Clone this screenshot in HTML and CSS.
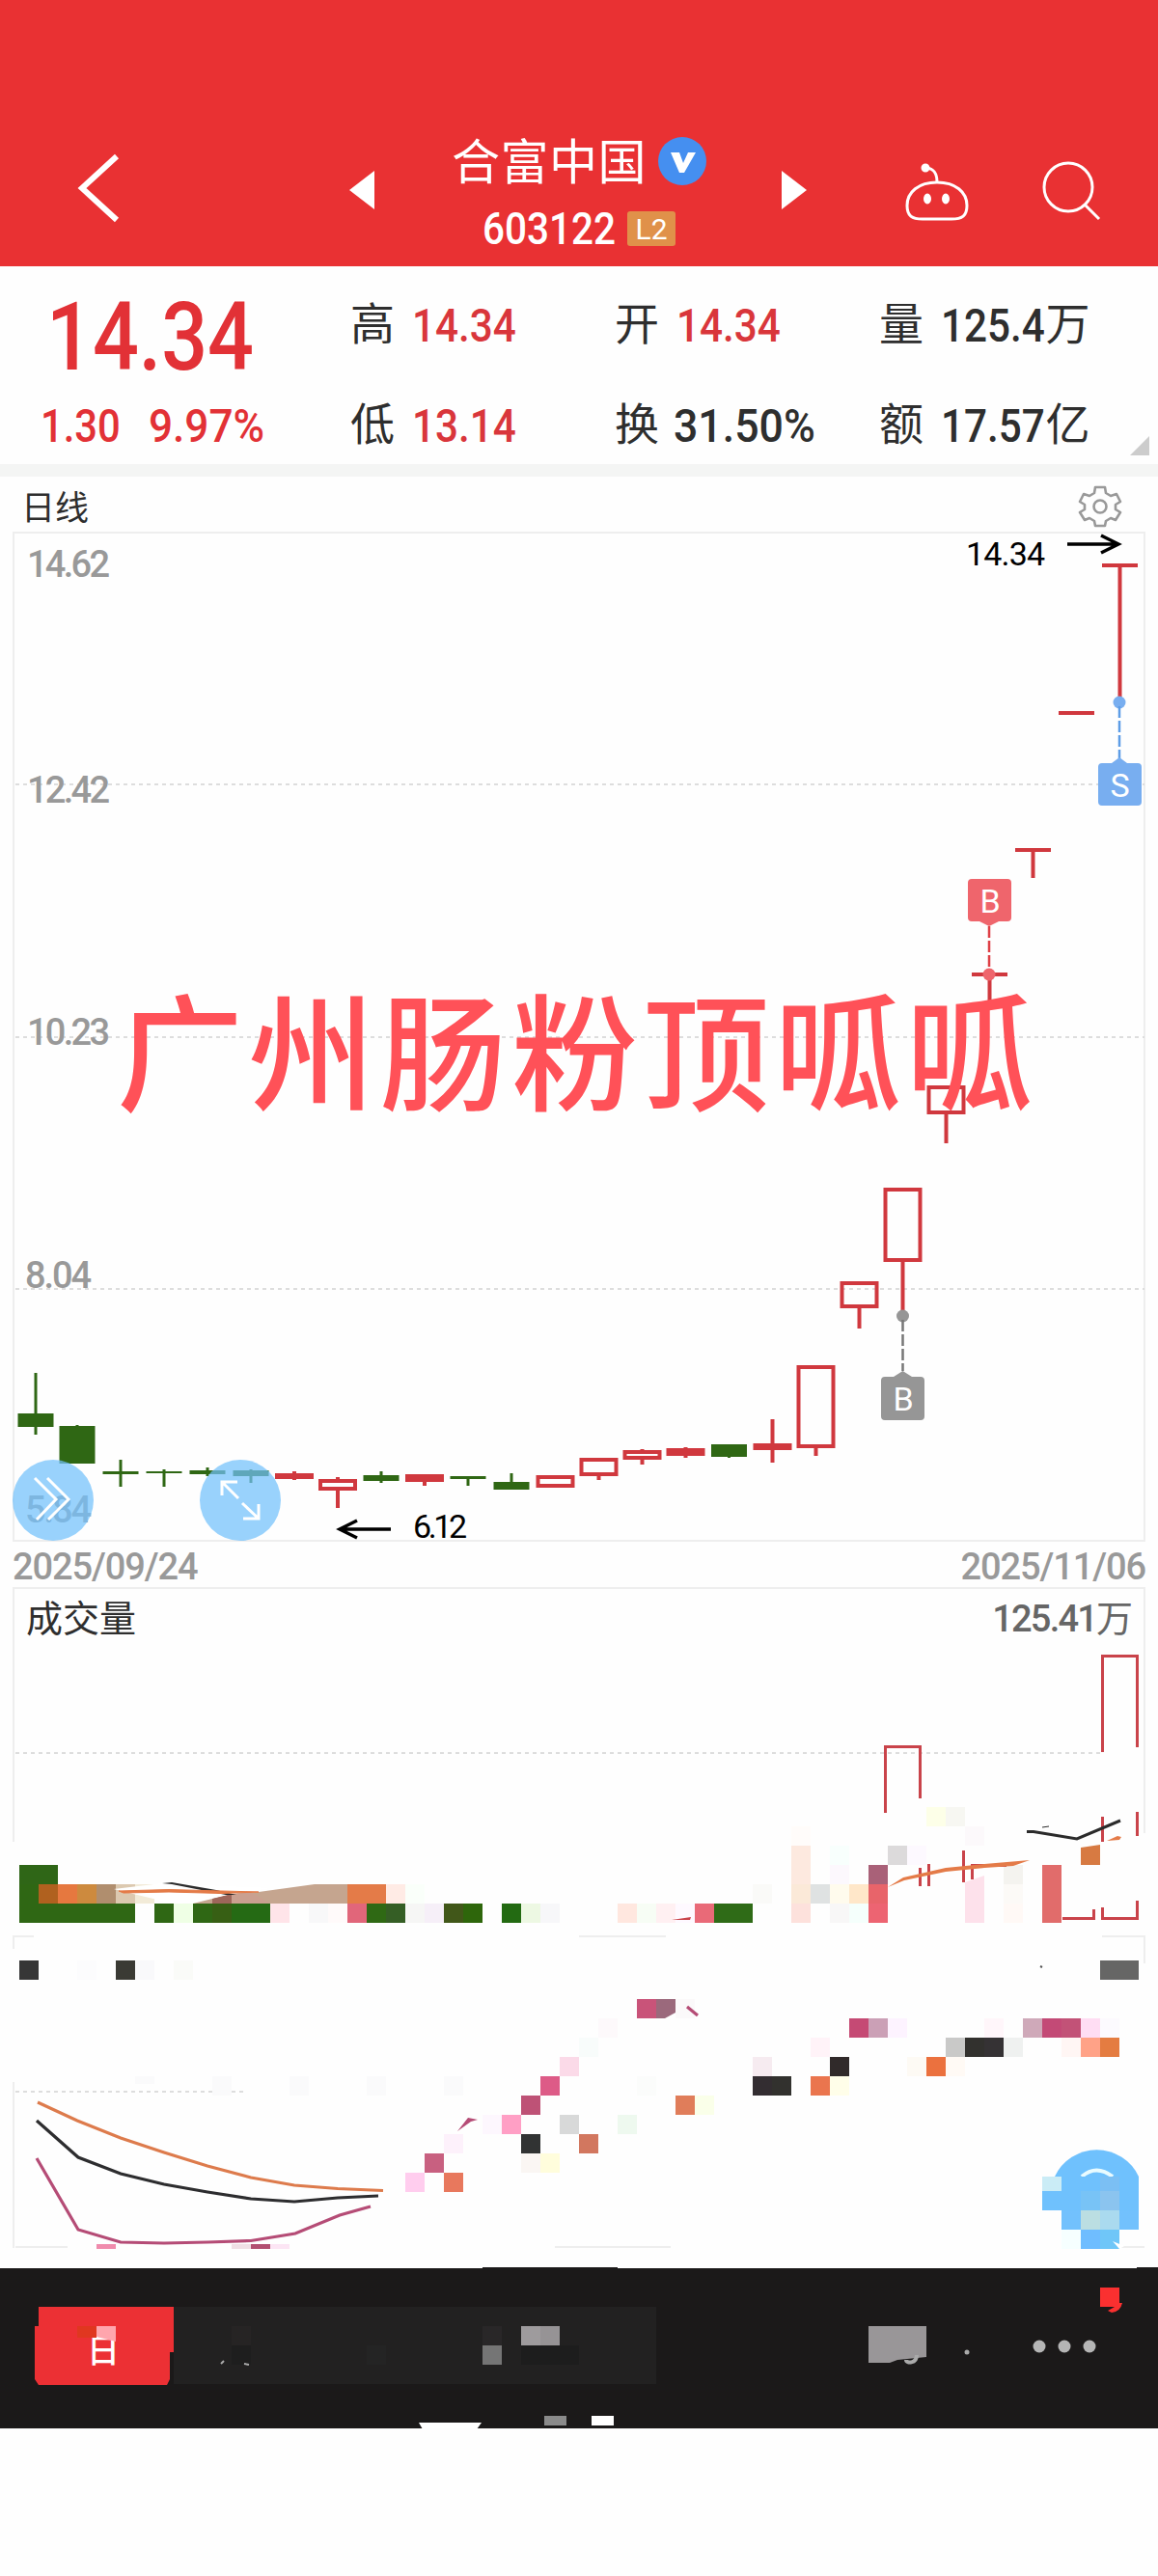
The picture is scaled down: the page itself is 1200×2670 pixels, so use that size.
FILE: index.html
```
<!DOCTYPE html>
<html lang="zh-CN">
<head>
    <meta charset="utf-8">
    <title>合富中国 603122</title>
    <link rel="stylesheet" href="styles.css">
</head>
<body>
    <header class="header">
        <svg class="back" width="46" height="72" viewBox="0 0 46 72"><path d="M41 3L5 36l36 33" fill="none" stroke="#fff" stroke-width="6"/></svg>
        <svg class="prev" width="26" height="40" viewBox="0 0 26 40"><path d="M26 0v40L0 20z" fill="#fff"/></svg>
        <div class="stock">
            <div class="name"><span>合富中国</span>
                <svg width="50" height="50" viewBox="0 0 50 50"><circle cx="25" cy="25" r="25" fill="#458ff0"/><path d="M13 16h9l4 11 5-11h8L27 37h-5z" fill="#fff"/></svg>
            </div>
            <div class="code"><span class="digits">603122</span><span class="level">L2</span></div>
        </div>
        <svg class="next" width="26" height="40" viewBox="0 0 26 40"><path d="M0 0v40l26-20z" fill="#fff"/></svg>
        <svg class="robot" width="68" height="62" viewBox="0 0 68 62" fill="none" stroke="#fff" stroke-width="3">
            <path d="M34 21c0-8-2-14-11-15"/><circle cx="22" cy="6" r="3" fill="#fff"/>
            <path d="M34 21c19 0 31 10 31 24 0 11-5 14-16 14H19C8 59 3 56 3 45c0-14 12-24 31-24z"/>
            <ellipse cx="24" cy="38" rx="2.5" ry="4" fill="#fff"/><ellipse cx="43" cy="38" rx="2.5" ry="4" fill="#fff"/>
        </svg>
        <svg class="search" width="64" height="64" viewBox="0 0 64 64" fill="none" stroke="#fff" stroke-width="3"><circle cx="28" cy="28" r="25"/><path d="M45 46l15 15"/></svg>
    </header>

    <section class="quote">
        <div class="last">
            <div class="price">14.34</div>
            <div class="change"><span>1.30</span><span class="percent">9.97%</span></div>
        </div>
        <div class="cell">高<b class="up">14.34</b></div>
        <div class="cell">开<b class="up">14.34</b></div>
        <div class="cell">量<b>125.4</b>万</div>
        <div class="cell">低<b class="up">13.14</b></div>
        <div class="cell">换<b class="wide">31.50%</b></div>
        <div class="cell">额<b>17.57</b>亿</div>
        <svg class="corner" width="20" height="20"><path d="M20 0v20H0z" fill="#ccc"/></svg>
    </section>

    <div class="period">
        <span>日线</span>
        <svg width="46" height="46" viewBox="-23 -23 46 46" fill="none" stroke="#999" stroke-width="2.6" stroke-linejoin="round">
            <path d="M-5-20H5L6-14 11-11 17-13 21-5 16-2V3L21 6 16 14 11 12 6 15 5 20H-5L-6 15-11 12-16 14-21 6-16 3V-2L-21-5-17-13-11-11-6-14z"/>
            <circle r="6.5"/>
        </svg>
    </div>

    <svg class="chart" id="kline" width="1200" height="1048" viewBox="0 551 1200 1048">
        <path class="frame" d="M14 552H1186V1597H14z"/>
        <path class="grid" d="M16 813H1186M16 1075H1186M16 1336H1186"/>
        <g class="axis">
            <text x="28" y="598" textLength="86">14.62</text>
            <text x="28" y="832" textLength="86">12.42</text>
            <text x="28" y="1083" textLength="86">10.23</text>
            <text x="26" y="1335" textLength="69">8.04</text>
            <text x="26" y="1578" textLength="69">5.84</text>
        </g>
        <g id="candles"></g>

        <!-- high / low marks -->
        <g class="mark">
            <text x="1001" y="586" textLength="82">14.34</text>
            <path d="M1106 564H1159M1141 555L1159 564 1141 573"/>
            <text x="428" y="1594" textLength="56">6.12</text>
            <path d="M405 1585H352M370 1576L352 1585 370 1594"/>
        </g>

        <!-- trade tags -->
        <g class="tag sell">
            <circle cx="1160" cy="728" r="6.5"/><path class="dash" d="M1160 732V786"/>
            <path d="M1142 791H1152L1160 785 1168 791H1179Q1183 791 1183 795V831Q1183 835 1179 835H1142Q1138 835 1138 831V795Q1138 791 1142 791z"/>
            <text x="1160.500" y="826">S</text>
        </g>
        <g class="tag buy">
            <circle cx="1025" cy="1010" r="6.5"/><path class="dash" d="M1025 960V1004"/>
            <path d="M1007 911H1044Q1048 911 1048 915V951Q1048 955 1044 955H1035L1025 960 1015 955H1007Q1003 955 1003 951V915Q1003 911 1007 911z"/>
            <text x="1026" y="946">B</text>
        </g>
        <g class="tag past">
            <circle cx="935.500" cy="1364" r="6.500"/><path class="dash" d="M935.500 1368V1421"/>
            <path d="M917 1427H926L935.500 1421 945 1427H954Q958 1427 958 1431V1468Q958 1472 954 1472H917Q913 1472 913 1468V1431Q913 1427 917 1427z"/>
            <text x="936" y="1462">B</text>
        </g>

        <g fill="#72c0fb" fill-opacity=".72"><circle cx="55" cy="1555" r="42"/><circle cx="249" cy="1555" r="42"/></g>
        <g fill="none" stroke="#fff" stroke-width="3">
            <path d="M36 1532L58 1554 38 1575M49 1532L71 1554 50 1575"/>
            <path d="M247 1553L230 1536M230 1550V1536H246M251 1558L268 1574M268 1559V1574H252"/>
        </g>
        <text class="watermark" x="121" y="1141" textLength="949">广州肠粉顶呱呱</text>
    </svg>

    <div class="dates"><span>2025/09/24</span><span>2025/11/06</span></div>

    <section class="volume">
        <div class="volume-head"><span>成交量</span><span class="total"><i>125.41</i>万</span></div>
        <svg class="chart" width="1200" height="292" viewBox="0 1712 1200 292">
            <path class="frame" d="M14 1712V1909M1186 1712V1900"/>
            <path class="grid" d="M16 1817H1140"/>
            <g id="volumeBlocks"></g>
            <path d="M200 1973L240 1963 268 1961 326 1953H360V1973z" fill="#c5a58f"/>
            <path d="M220 1968L240 1963V1973H220z" fill="#9e665a"/>
            <path d="M240 1963L260 1961 280 1973H240z" fill="#caa090"/>
            <path d="M118 1958L168 1952 280 1957 240 1963 200 1972 180 1973 138 1963z" fill="#fff"/>
            <path d="M168 1952L178 1951 224 1959 245 1964 234 1964 178 1953z" fill="#2b2b2b"/>
            <path d="M123 1960L175 1958.500 268 1961 230 1962.500 175 1961 128 1962z" fill="#e47b48" stroke="#e47b48"/>
            <path d="M1000 1951L1020 1944V1993H1000z" fill="#fde1eb"/>
            <path d="M1120 1915L1140 1912V1933H1120z" fill="#d77a42"/>
            <g class="volume-bars">
                <path d="M1142.500 1816V1716.500H1178.500V1811M917.500 1879V1810.500H953.500V1864"/>
                <path d="M953.500 1936V1955M962.500 1932V1955M998.500 1918V1951M1007.500 1948V1933.500H1043"/>
                <path d="M1142.500 1883V1909M1178.500 1878V1903M1101 1988.500H1133.500V1979M1142.500 1977V1988.500H1178.500V1970"/>
            </g>
            <path d="M696 1990L716 1987 715 1990z" fill="#c9434a"/>
            <path d="M920 1956L936 1946 980 1936 1020 1932 1067 1928 1050 1934 1020 1936 980 1940 937 1949zM1147 1908L1158 1903 1162 1904 1160 1907z" fill="#e47b48"/>
            <path d="M1064 1898.500H1071L1116 1906 1161 1887" fill="none" stroke="#2b2b2b" stroke-width="3"/>
            <path d="M1080 1894L1087 1893" stroke="#2b2b2b"/>
        </svg>
    </section>

    <svg class="chart" width="1200" height="346" viewBox="0 2004 1200 346">
        <path class="frame" d="M14 2020V2007H35M600 2007H690M1142 2007H1186V2035M14 2158V2330M16 2329H70M575 2329H695M1160 2329H1186"/>
        <path class="grid" d="M16 2168H255"/>
        <path d="M1093 2256A48 48 0 0 1 1180 2256z" fill="#6fc1fd"/>
        <path d="M1121 2256Q1136 2243 1153 2256" fill="none" stroke="#e9fbff" stroke-width="4"/>
        <g id="indicatorBlocks"></g>
        <path d="M680 2072H700V2086L689 2092H680z" fill="#9b697c"/>
        <g fill="none" stroke-width="3.200">
            <path stroke="#dd7b4c" d="M39 2179L80 2198 125 2216 170 2231 215 2245 260 2257 305 2265 350 2268.500 397 2270.500"/>
            <path stroke="#2d2d2f" d="M38 2198L81 2236 125 2253 170 2264 215 2272 260 2279 305 2282 350 2278 392 2276"/>
            <path stroke="#b54c76" d="M38 2237L81 2311 125 2324 170 2325 215 2324 260 2322.500 306 2315 352 2296 384 2287M712 2080L723 2089"/>
        </g>
        <path d="M474 2209L485 2195 495 2197 488 2199z" fill="#b54c76"/>
        <path d="M1153 2323L1165 2328 1160 2331z" fill="#fff"/>
        <path d="M1078 2038L1080 2039" stroke="#555" stroke-width="2"/>
    </svg>

    <footer class="tabbar">
        <svg width="1200" height="168" viewBox="0 2350 1200 168">
            <path d="M180 2391H680V2471H180z" fill="#222121"/>
            <path d="M40 2391H180V2438H176V2466L173 2472H40L36 2466V2411H40z" fill="#ec3034"/>
            <text x="90" y="2449" class="tab">日</text>
            <path d="M100 2411H120V2427L100 2422z" fill="#ffa5ad"/>
            <g id="tabBlocks"></g>
            <path d="M900 2411H960V2443L930 2446 922 2449H900z" fill="#999698"/>
            <path d="M939 2446C939 2450 950 2450 950 2441" fill="none" stroke="#aaa" stroke-width="4"/>
            <path d="M229 2450L232 2447M253 2450L258 2451" stroke="#aaa" stroke-width="2"/>
            <circle cx="1002" cy="2438" r="2.500" fill="#aaa"/>
            <g fill="#b5b5b5"><circle cx="1077" cy="2432" r="6.500"/><circle cx="1103" cy="2432" r="6.500"/><circle cx="1129" cy="2432" r="6.500"/></g>
            <path d="M1140 2371H1160V2387H1163Q1161 2396 1152 2397L1148 2395 1155 2391H1140z" fill="#fa3030"/>
            <path d="M434 2511H499L494 2518H438z" fill="#fff"/>
            <path d="M0 2350H500V2351H0zM640 2350H1178V2351H640z" fill="#fff"/>
        </svg>
    </footer>

    <script>
        const NS = 'http://www.w3.org/2000/svg';
        const GREEN = '#2f6714', RED = '#d0383e';

        // [x centre, high, top, bottom, low, type]  g: solid green, r: hollow red, f: flat red
        const candles = [
            [37, 1423, 1465, 1479, 1487, 'g'], [80, 1477, 1478, 1517, 1517, 'g'],
            [125, 1513, 1525, 1528, 1541, 'g'], [170, 1523, 1525, 1527, 1541, 'g'],
            [215, 1521, 1524, 1528, 1530, 'g'], [260, 1523, 1524, 1530, 1537, 'g'],
            [305, 1525, 1527, 1533, 1534, 'r'], [350, 1531, 1533, 1545, 1563, 'r'],
            [395, 1525, 1529, 1535, 1537, 'g'], [440, 1528, 1528, 1536, 1540, 'r'],
            [485, 1530, 1530, 1533, 1540, 'g'], [530, 1527, 1536, 1544, 1544, 'g'],
            [575.5, 1529, 1529, 1542, 1542, 'r'], [620.5, 1511, 1511, 1530, 1534, 'r'],
            [665.5, 1502, 1503, 1513, 1518, 'r'], [710.5, 1500, 1501, 1509, 1511, 'r'],
            [755.5, 1497, 1497, 1510, 1511, 'g'], [800.5, 1471, 1496, 1503, 1516, 'r'],
            [845.5, 1415, 1415, 1501, 1509, 'r'], [890.5, 1328, 1328, 1356, 1377, 'r'],
            [935.5, 1231, 1231, 1308, 1364, 'r'], [980.5, 1125, 1125, 1155, 1185, 'r'],
            [1025.5, 1008, 1008, 1012, 1040, 'f'], [1070.5, 879, 879, 883, 910, 'f'],
            [1115.5, 737, 737, 741, 741, 'f'], [1160.5, 584, 584, 588, 727, 'f']
        ];

        // y: [[x, width, colour, height], ...]
        const volumeBlocks = {
            1873: [[960, 20, '#fdffe8'], [980, 20, '#f7f7f2']],
            1893: [[820, 20, '#fffcfa'], [1000, 20, '#fcf9fb']],
            1913: [[820, 20, '#fde9df'], [860, 20, '#f8fffd'], [920, 20, '#dcdadb'], [940, 20, '#fdf9ff']],
            1933: [[20, 40, '#2f6617'], [820, 20, '#fde9df'], [860, 20, '#fcf8fd'], [900, 20, '#a96178'], [1040, 20, '#f4f3ef'], [1080, 20, '#e16c6b']],
            1953: [[20, 20, '#2f6714'], [40, 20, '#b0611f'], [60, 20, '#e6783f'], [80, 20, '#cd8a3e'], [100, 20, '#b08e6e'], [120, 20, '#dcc9b0'], [140, 20, '#f2ebd8'],
                   [360, 40, '#e47b48'], [400, 20, '#ffebe5'], [420, 20, '#fafffa'], [780, 20, '#fafaf8'], [820, 20, '#fbe9d8'], [840, 20, '#dfe2e2'], [860, 20, '#fffbed'],
                   [880, 20, '#ffe7c9'], [900, 20, '#e8646a'], [1040, 20, '#fcfaf7'], [1080, 20, '#e16c6b']],
            1973: [[20, 120, '#2f6714'], [160, 20, '#2f6714'], [180, 20, '#efffe5'], [200, 20, '#2f6714'], [220, 20, '#375f14'], [240, 40, '#256a14'], [280, 20, '#ffe4e9'],
                   [320, 20, '#f8f8f9'], [340, 20, '#fffafa'], [360, 20, '#e1667a'], [380, 20, '#2f6914'], [400, 20, '#355e25'], [420, 20, '#f6f6f5'], [440, 20, '#f6eff8'],
                   [460, 20, '#415719'], [480, 20, '#2e660b'], [520, 20, '#236a12'], [540, 20, '#edf8e3'], [560, 20, '#f7f7f9'], [640, 20, '#ffe7df'], [660, 20, '#f7fdf5'],
                   [680, 20, '#fff0f2'], [700, 20, '#fef9ff'], [720, 20, '#e96a78'], [740, 40, '#2f6b17'], [820, 20, '#fde1dc'], [860, 20, '#f8f7f7'], [880, 20, '#f5fffc'],
                   [900, 20, '#ed6472'], [1040, 20, '#fff9f6'], [1080, 20, '#e16c6b']]
        };
        const indicatorBlocks = {
            2032: [[20, 20, '#363636'], [80, 20, '#fcfcfd'], [120, 20, '#3a3a34'], [140, 20, '#f9f9fb'], [180, 20, '#fafbf8'], [1140, 40, '#666665']],
            2072: [[660, 20, '#c95379'], [700, 20, '#fbf9fa']],
            2092: [[620, 20, '#fdf9fb'], [880, 20, '#c54a74'], [900, 20, '#cba0b6'], [920, 20, '#fdf3ff'], [1020, 20, '#fff6fa'], [1060, 20, '#cfa9b9'], [1080, 20, '#c34a76'], [1100, 20, '#c25277'], [1120, 20, '#ffddf3'], [1140, 20, '#fcfafe']],
            2112: [[600, 20, '#f8fcfb'], [840, 20, '#fff3f8'], [980, 20, '#c9c9c8'], [1000, 20, '#32312e'], [1020, 20, '#353234'], [1040, 20, '#eff1f0'], [1100, 20, '#fff6f4'], [1120, 20, '#ffa287'], [1140, 20, '#e47c41']],
            2132: [[580, 20, '#fbdae8'], [780, 20, '#f6ebf0'], [860, 20, '#302a2a'], [940, 20, '#fdfaf4'], [960, 20, '#eb713e'], [980, 20, '#fffaf5']],
            2152: [[140, 20, '#fafafb', 8], [220, 20, '#fafafb'], [300, 20, '#fafafb'], [380, 20, '#fafafb'], [460, 20, '#fafafb'], [560, 20, '#dd5b87'], [660, 20, '#fbfcfb'], [780, 20, '#332d31'], [800, 20, '#32312e'], [840, 20, '#ea754e'], [860, 20, '#fffee9']],
            2172: [[540, 20, '#be5276'], [700, 20, '#e07d5a'], [720, 20, '#faffe9']],
            2192: [[500, 20, '#fdf7fe'], [520, 20, '#ff9fc5'], [580, 20, '#d8d9d9'], [640, 20, '#eef9ef']],
            2212: [[460, 20, '#fdf1fb'], [540, 20, '#313333'], [600, 20, '#d2775f']],
            2232: [[440, 20, '#c86080'], [540, 20, '#faf6f3'], [560, 20, '#fffddc']],
            2252: [[420, 20, '#ffcdee'], [460, 20, '#e8785d']],
            2256: [[1080, 20, '#caecf6', 15], [1100, 80, '#6fc1fd', 15], [1140, 20, '#7bbff4', 15]],
            2271: [[1080, 100, '#6fc1fd'], [1120, 20, '#78c3f6'], [1140, 20, '#8bc4ef']],
            2291: [[1100, 80, '#72c1fd'], [1120, 20, '#bbdee2'], [1140, 20, '#aadaef']],
            2311: [[1100, 20, '#f6ffff'], [1120, 20, '#6fbdff'], [1140, 20, '#6fc6f8']],
            2326: [[100, 20, '#f08cad', 5], [240, 20, '#f0dfe5', 5], [260, 20, '#b24f71', 5], [280, 20, '#fce5f4', 5]]
        };
        const tabBlocks = {
            2411: [[80, 20, '#e03720', 12], [240, 20, '#262424'], [500, 20, '#292728'], [540, 20, '#9e9b9d'], [560, 20, '#969395']],
            2431: [[240, 20, '#1e1e1e'], [380, 20, '#242424'], [500, 20, '#757575'], [540, 60, '#1d1d1d']],
            2504: [[564, 23, '#8a8a8a', 10], [613, 23, '#fff', 10]]
        };

        function rect(parent, x, y, w, h, fill, stroke) {
            const r = document.createElementNS(NS, 'rect');
            r.setAttribute('x', x);
            r.setAttribute('y', y);
            r.setAttribute('width', w);
            r.setAttribute('height', h);
            r.setAttribute('fill', fill);
            if (stroke) {
                r.setAttribute('stroke', stroke);
                r.setAttribute('stroke-width', 4);
            }
            parent.appendChild(r);
        }

        function drawBlocks(id, rows) {
            const g = document.getElementById(id);
            for (const y in rows) {
                rows[y].forEach(b => rect(g, b[0], y, b[1], b[3] || 20, b[2]));
            }
        }

        const g = document.getElementById('candles');
        candles.forEach(([x, high, top, bottom, low, type]) => {
            const color = type === 'g' ? GREEN : RED;
            const wick = type === 'g' ? 3 : 4;
            if (high < top) rect(g, x - wick / 2, high, wick, top - high, color);
            if (low > bottom) rect(g, x - wick / 2, bottom, wick, low - bottom, color);
            if (type === 'r') {
                rect(g, x - 18, top + 2, 36, Math.max(bottom - top - 4, 1), bottom - top < 9 ? RED : 'none', RED);
            } else {
                rect(g, x - 18.5, top, 37, bottom - top, color);
            }
        });

        drawBlocks('volumeBlocks', volumeBlocks);
        drawBlocks('indicatorBlocks', indicatorBlocks);
        drawBlocks('tabBlocks', tabBlocks);
    </script>
</body>
</html>
```
FILE: styles.css
```
body {
    margin: 0;
    width: 1200px;
    height: 2670px;
    background-color: #fefefe;
    color: #2e2e2e;
    font-family: Roboto, "Noto Sans CJK SC", sans-serif;
}
svg {
    display: block;
    flex: none;
}

/* title bar */
.header {
    display: flex;
    height: 136px;
    padding: 140px 57px 0 80px;
    background-color: #e93133;
    color: #fff;
}
.back {
    margin-top: 19px;
}
.prev {
    margin: 37px 0 0 236px;
}
.stock {
    width: 424px;
    box-sizing: border-box;
    padding-left: 80px;
}
.name {
    display: flex;
    align-items: center;
    gap: 12px;
    height: 54px;
    font-size: 50px;
    letter-spacing: 0.5px;
    white-space: nowrap;
}
.name span {
    padding-bottom: 7px;
}
.code {
    display: flex;
    align-items: center;
    height: 40px;
    margin: 23px 0 0 32px;
}
.digits {
    width: 150px;
    font-size: 46px;
    font-weight: 500;
    transform: scaleX(0.88);
    transform-origin: left;
}
.level {
    width: 50px;
    height: 36px;
    border-radius: 3px;
    background-color: #e0914a;
    font-size: 30px;
    line-height: 37px;
    text-align: center;
}
.next {
    margin-top: 37px;
}
.robot {
    margin: 28px 0 0 101px;
}
.search {
    margin: 26px 0 0 74px;
}

/* quote */
.quote {
    display: grid;
    grid-template-columns: 321px 274px 274px 1fr;
    grid-template-rows: 104px 104px;
    box-sizing: border-box;
    height: 218px;
    padding: 5px 0 0 42px;
    border-bottom: 13px solid #f4f5f4;
    position: relative;
}
.last {
    grid-row: 1 / 3;
    color: #e23136;
    font-weight: 500;
}
.price {
    height: 104px;
    margin-left: 6px;
    font-size: 98px;
    line-height: 138px;
    transform: scaleX(0.86);
    transform-origin: left;
}
.change {
    display: flex;
    gap: 17px;
    font-size: 48px;
    line-height: 114px;
}
.change span {
    transform: scaleX(0.87);
    transform-origin: left;
}
.change .percent {
    transform: scaleX(0.92);
}
.cell {
    display: flex;
    align-items: center;
    height: 104px;
    padding-top: 3px;
    font-size: 46px;
    line-height: 104px;
    white-space: nowrap;
}
.cell b {
    margin: 4px -14px 0 18px;
    font-size: 48px;
    font-weight: 500;
    transform: scaleX(0.88);
    transform-origin: left;
}
.cell .wide {
    margin-left: 15px;
    transform: scaleX(0.93);
}
.cell .up {
    color: #d9363b;
}
.corner {
    position: absolute;
    right: 9px;
    bottom: 9px;
}

/* charts */
.chart {
    overflow: visible;
}
.period {
    display: flex;
    align-items: center;
    justify-content: space-between;
    height: 57px;
    padding: 0 37px 0 22px;
    font-size: 35px;
}
.period span {
    padding-top: 1px;
}
.period svg {
    margin-top: 5px;
}
.frame {
    fill: none;
    stroke: #eee;
    stroke-width: 2;
}
.grid {
    fill: none;
    stroke: #ddd;
    stroke-width: 2;
    stroke-dasharray: 4 4;
}
.axis text {
    font-size: 38px;
    font-weight: 500;
    fill: #999;
}
.mark text {
    font-size: 34px;
    fill: #000;
}
.mark path {
    fill: none;
    stroke: #000;
    stroke-width: 3.5;
}
.tag text {
    font-size: 34px;
    fill: #fff;
    text-anchor: middle;
}
.tag .dash {
    fill: none;
    stroke-width: 2.5;
    stroke-dasharray: 12 3;
}
.sell {
    fill: #78aef0;
}
.sell .dash {
    stroke: #5d9de6;
}
.buy {
    fill: #ef656c;
}
.buy .dash {
    stroke: #de3f45;
}
.past {
    fill: #969696;
}
.past .dash {
    stroke: #777;
}
.watermark {
    font-family: "Noto Sans CJK SC", sans-serif;
    font-size: 131px;
    font-weight: 500;
    fill: #ff5158;
}
.dates {
    display: flex;
    justify-content: space-between;
    height: 46px;
    padding: 0 13px;
    color: #999;
    font-size: 38px;
    font-weight: 500;
    line-height: 50px;
    letter-spacing: -1.1px;
}
.volume-head {
    display: flex;
    justify-content: space-between;
    box-sizing: border-box;
    height: 67px;
    margin: 0 13px;
    padding: 0 11px 0 12px;
    border: 2px solid #eee;
    border-bottom: none;
    font-size: 38px;
    line-height: 63px;
}
.total {
    color: #666;
}
.total i {
    font-style: normal;
    font-weight: 500;
    letter-spacing: -1.8px;
}
.volume-bars {
    fill: none;
    stroke: #c9434a;
    stroke-width: 3;
}

/* bottom tabs */
.tabbar {
    height: 167px;
    background-color: #1b1919;
    overflow: hidden;
}
.tab {
    font-size: 34px;
    font-weight: 500;
    fill: #fff;
}
```
